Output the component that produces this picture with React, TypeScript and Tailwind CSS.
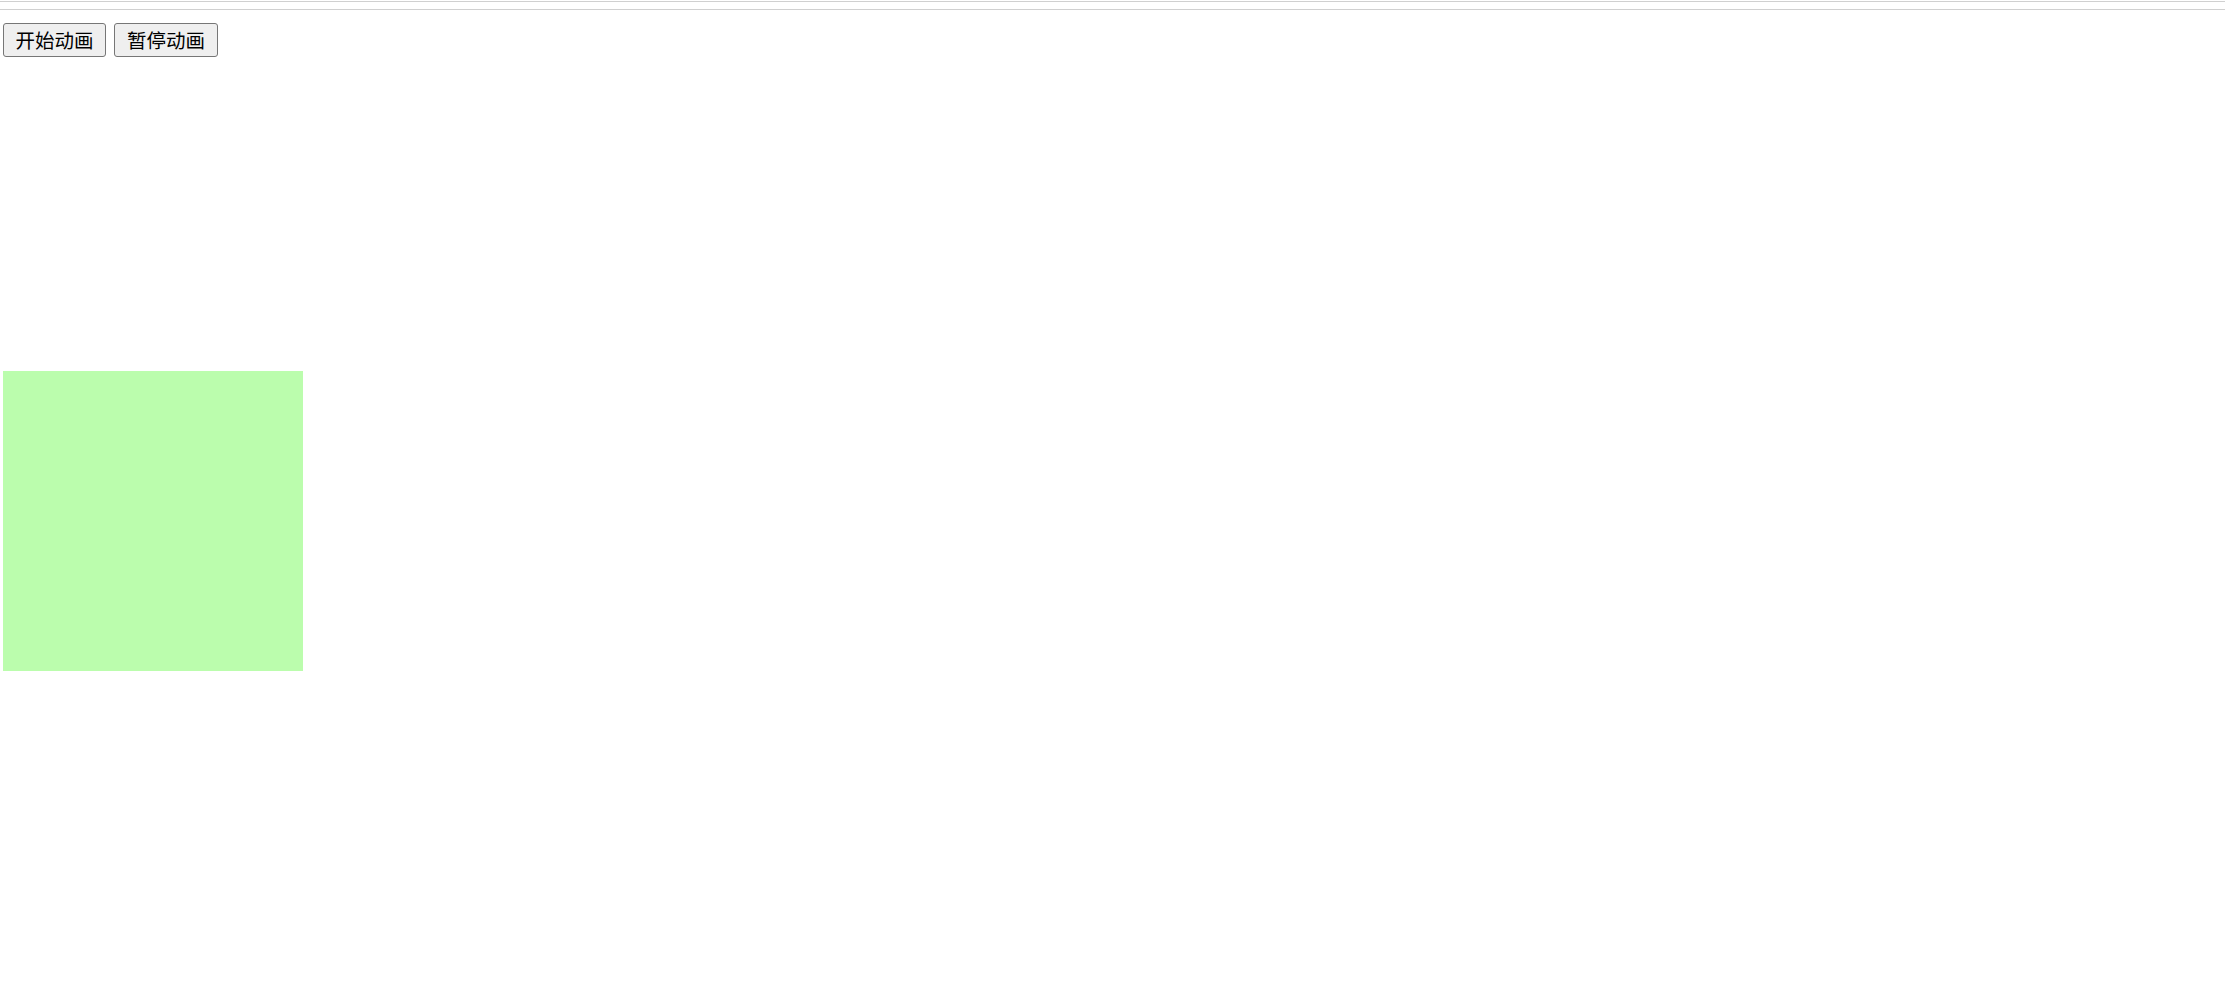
import React from "react";

export default function App() {
  return (
    <div className="min-h-screen bg-white pt-[1px] font-['Noto_Sans_CJK_SC',sans-serif]">
      <div className="h-[9px] border-y border-[#d0d0d0]"></div>
      <div className="flex gap-2 pl-[3px] pt-[13px]">
        <button className="h-[34px] w-[103px] rounded-[3px] border border-[#767676] bg-[#efefef] text-[19.5px] leading-none text-black">
          开始动画
        </button>
        <button className="h-[34px] w-[104px] rounded-[3px] border border-[#767676] bg-[#efefef] text-[19.5px] leading-none text-black">
          暂停动画
        </button>
      </div>
      <div className="ml-[3px] mt-[314px] h-[300px] w-[300px] bg-[#bbfdad]"></div>
    </div>
  );
}
